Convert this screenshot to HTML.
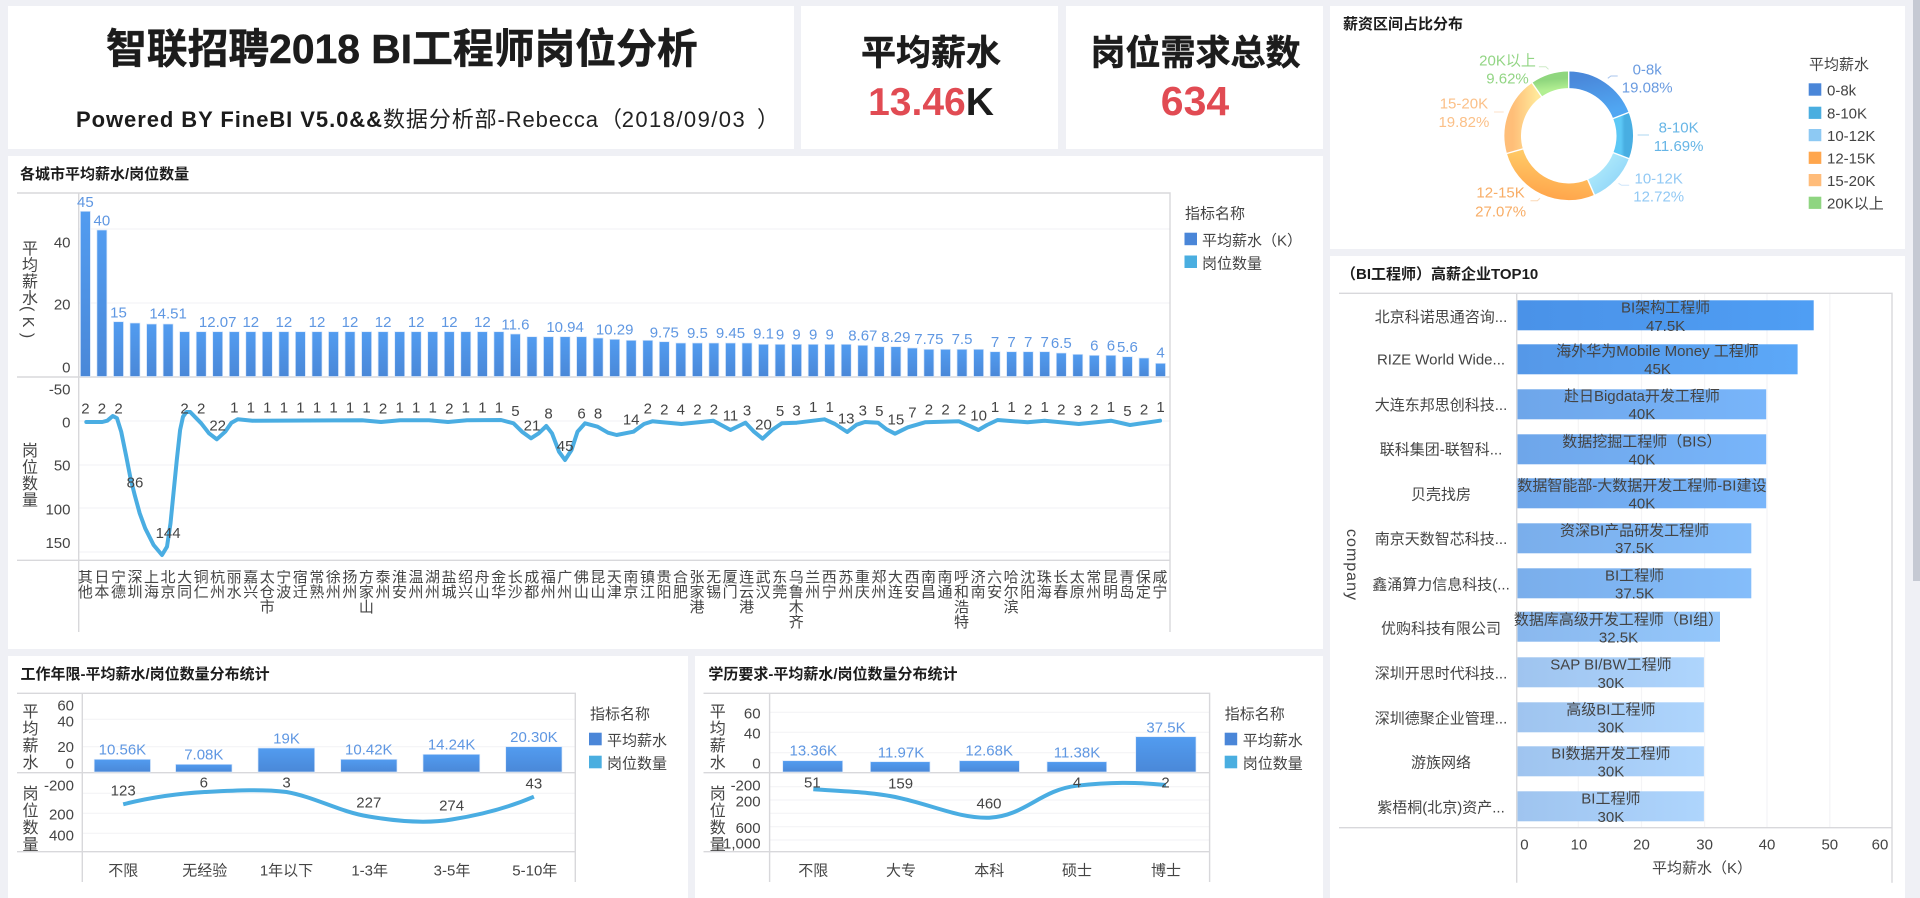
<!DOCTYPE html>
<html lang="zh">
<head>
<meta charset="utf-8">
<title>智联招聘2018 BI工程师岗位分析</title>
<style>
html,body{margin:0;padding:0;width:1920px;height:898px;overflow:hidden;background:#eff0f5;}
body{position:relative;font-family:"Liberation Sans","Noto Sans CJK SC",sans-serif;}
#w{position:absolute;left:0;top:0;width:1920px;height:898px;filter:blur(.35px);}
.p{position:absolute;background:#fff;}
svg{position:absolute;left:0;top:0;}
svg text{font-family:"Liberation Sans","Noto Sans CJK SC",sans-serif;font-size:15px;fill:#444;}
.h{font-weight:700;fill:#1c1c1c;}
.big{stroke:#1c1c1c;stroke-width:.5px;}
.m text{text-anchor:middle;}
.e text{text-anchor:end;}
.bl text{fill:#5f97e2;text-anchor:middle;}
.v{position:absolute;writing-mode:vertical-rl;width:20px;line-height:20px;font-size:16px;letter-spacing:.5px;color:#444;white-space:nowrap;}
.cities{position:absolute;left:77.13px;top:570px;width:1092px;height:60px;overflow:hidden;display:flex;}
.cities div{flex:0 0 16.54px;width:16.54px;text-align:center;font-size:15px;line-height:15px;color:#444;word-break:break-all;display:block;}
.cities span{display:block;width:16px;margin:0 auto;}
</style>
</head>
<body>
<div id="w">
<div class="p" style="left:8px;top:6px;width:786px;height:143px"></div>
<div class="p" style="left:801px;top:6px;width:257px;height:143px"></div>
<div class="p" style="left:1066px;top:6px;width:257px;height:143px"></div>
<div class="p" style="left:8px;top:156px;width:1315px;height:493px"></div>
<div class="p" style="left:8px;top:656px;width:680px;height:242px"></div>
<div class="p" style="left:695px;top:656px;width:628px;height:242px"></div>
<div class="p" style="left:1330px;top:6px;width:575px;height:243px"></div>
<div class="p" style="left:1330px;top:256px;width:575px;height:642px"></div>
<div style="position:absolute;left:1913px;top:0;width:7px;height:581px;background:#c5c9d3"></div>

<svg width="1920" height="898" viewBox="0 0 1920 898" xmlns="http://www.w3.org/2000/svg">
<defs>
<linearGradient id="vb" x1="0" y1="0" x2="0" y2="1"><stop offset="0" stop-color="#529cf0"/><stop offset="1" stop-color="#4a88d8"/></linearGradient>
<linearGradient id="h1" x1="0" x2="1" y1="0" y2="0"><stop offset="0" stop-color="#4a92e8"/><stop offset="1" stop-color="#4f9ef4"/></linearGradient>
<linearGradient id="h2" x1="0" x2="1" y1="0" y2="0"><stop offset="0" stop-color="#5598e8"/><stop offset="1" stop-color="#5ca8f8"/></linearGradient>
<linearGradient id="h3" x1="0" x2="1" y1="0" y2="0"><stop offset="0" stop-color="#6ea6ea"/><stop offset="1" stop-color="#78b5fa"/></linearGradient>
<linearGradient id="h4" x1="0" x2="1" y1="0" y2="0"><stop offset="0" stop-color="#7aaeeb"/><stop offset="1" stop-color="#84bdfa"/></linearGradient>
<linearGradient id="h5" x1="0" x2="1" y1="0" y2="0"><stop offset="0" stop-color="#8ab8ee"/><stop offset="1" stop-color="#94c7fb"/></linearGradient>
<linearGradient id="h6" x1="0" x2="1" y1="0" y2="0"><stop offset="0" stop-color="#9fc4ef"/><stop offset="1" stop-color="#aed5fd"/></linearGradient>
<linearGradient id="d1" x1="0" y1="0" x2="0.3" y2="1"><stop offset="0" stop-color="#4a88da"/><stop offset="1" stop-color="#50a6f2"/></linearGradient>
<linearGradient id="d2" x1="1" y1="0" x2="0" y2="0"><stop offset="0" stop-color="#48aee2"/><stop offset="1" stop-color="#5cc8f6"/></linearGradient>
<linearGradient id="d3" x1="1" y1="1" x2="0" y2="0"><stop offset="0" stop-color="#8ed4f8"/><stop offset="1" stop-color="#b8f0fc"/></linearGradient>
<linearGradient id="d4" x1="0" y1="1" x2="0.3" y2="0"><stop offset="0" stop-color="#ffa64c"/><stop offset="1" stop-color="#ffcc68"/></linearGradient>
<linearGradient id="d5" x1="0" y1="0" x2="1" y2="0"><stop offset="0" stop-color="#ffbe78"/><stop offset="1" stop-color="#ffe89a"/></linearGradient>
<linearGradient id="d6" x1="0.3" y1="0" x2="0.6" y2="1"><stop offset="0" stop-color="#8fd67e"/><stop offset="1" stop-color="#b2ef92"/></linearGradient>
</defs>

<!-- Header -->
<text class="h big" x="106" y="63" style="font-size:40.8px">智联招聘2018 BI工程师岗位分析</text>
<text class="h" x="76" y="127" textLength="306" lengthAdjust="spacing" style="font-size:22px">Powered BY FineBI V5.0&amp;&amp;</text>
<text x="383" y="127" textLength="215" lengthAdjust="spacing" style="font-size:22px;fill:#222">数据分析部-Rebecca</text>
<text x="600" y="127" style="font-size:22px;fill:#222">（</text>
<text x="621.7" y="127" textLength="123" lengthAdjust="spacing" style="font-size:22px;fill:#222">2018/09/03</text>
<text x="757" y="127" style="font-size:22px;fill:#222">）</text>
<text class="h big" x="931" y="65" text-anchor="middle" style="font-size:35px">平均薪水</text>
<text class="h" x="931" y="115" text-anchor="middle" style="font-size:39px;fill:#1c1c1c"><tspan style="fill:#e14b53">13.46</tspan>K</text>
<text class="h big" x="1195.5" y="65" text-anchor="middle" style="font-size:35px">岗位需求总数</text>
<text class="h" x="1195" y="115" text-anchor="middle" style="font-size:41px;fill:#e14b53">634</text>

<!-- Chart 1 frame -->
<text class="h" x="20" y="179">各城市平均薪水/岗位数量</text>
<g stroke="#f4f4f6" stroke-width="1.2">
<path d="M79 229H1170M79 303H1170M79 421H1170M79 465H1170M79 508H1170M79 552H1170"/>
</g>
<g fill="none" stroke="#d8d8db" stroke-width="1.4">
<path d="M17 193H1170V632M78.7 193V632M17 377H1170M17 560.3H1170"/>
</g>
<g class="e">
<text x="70.5" y="247.5">40</text><text x="70.5" y="309.5">20</text><text x="70.5" y="372.5">0</text><text x="70.5" y="394.5">-50</text><text x="70.5" y="427.5">0</text><text x="70.5" y="470.5">50</text><text x="70.5" y="514.5">100</text><text x="70.5" y="548">150</text>
</g>
<g fill="url(#vb)" stroke="#dbe8fa" stroke-width=".7">
<rect x="80.4" y="211.3" width="10" height="165.2"/><rect x="96.9" y="230" width="10" height="146.5"/><rect x="113.5" y="321.7" width="10" height="54.8"/><rect x="130" y="323" width="10" height="53.5"/><rect x="146.6" y="324" width="10" height="52.5"/><rect x="163.1" y="324" width="10" height="52.5"/>
<rect x="179.6" y="331.7" width="10" height="44.8"/><rect x="196.2" y="331.7" width="10" height="44.8"/><rect x="212.7" y="331.7" width="10" height="44.8"/><rect x="229.3" y="331.7" width="10" height="44.8"/><rect x="245.8" y="331.7" width="10" height="44.8"/><rect x="262.3" y="331.7" width="10" height="44.8"/><rect x="278.9" y="331.7" width="10" height="44.8"/><rect x="295.4" y="331.7" width="10" height="44.8"/><rect x="312" y="331.7" width="10" height="44.8"/><rect x="328.5" y="331.7" width="10" height="44.8"/><rect x="345" y="331.7" width="10" height="44.8"/><rect x="361.6" y="331.7" width="10" height="44.8"/><rect x="378.1" y="331.7" width="10" height="44.8"/><rect x="394.7" y="331.7" width="10" height="44.8"/><rect x="411.2" y="331.7" width="10" height="44.8"/><rect x="427.7" y="331.7" width="10" height="44.8"/><rect x="444.3" y="331.7" width="10" height="44.8"/><rect x="460.8" y="331.7" width="10" height="44.8"/><rect x="477.4" y="331.7" width="10" height="44.8"/><rect x="493.9" y="331.7" width="10" height="44.8"/>
<rect x="510.4" y="334" width="10" height="42.5"/><rect x="527" y="336.7" width="10" height="39.8"/><rect x="543.5" y="336.7" width="10" height="39.8"/><rect x="560.1" y="336.7" width="10" height="39.8"/><rect x="576.6" y="336.7" width="10" height="39.8"/><rect x="593.1" y="338" width="10" height="38.5"/><rect x="609.7" y="339.3" width="10" height="37.2"/><rect x="626.2" y="340.3" width="10" height="36.2"/><rect x="642.8" y="340.3" width="10" height="36.2"/><rect x="659.3" y="341.7" width="10" height="34.8"/>
<rect x="675.8" y="343" width="10" height="33.5"/><rect x="692.4" y="343" width="10" height="33.5"/><rect x="708.9" y="343" width="10" height="33.5"/><rect x="725.5" y="343" width="10" height="33.5"/><rect x="742" y="343" width="10" height="33.5"/>
<rect x="758.5" y="344.3" width="10" height="32.2"/><rect x="775.1" y="344.3" width="10" height="32.2"/><rect x="791.6" y="344.3" width="10" height="32.2"/><rect x="808.2" y="344.3" width="10" height="32.2"/><rect x="824.7" y="344.3" width="10" height="32.2"/><rect x="841.2" y="344.3" width="10" height="32.2"/>
<rect x="857.8" y="345.3" width="10" height="31.2"/><rect x="874.3" y="346.7" width="10" height="29.8"/><rect x="890.9" y="346.7" width="10" height="29.8"/><rect x="907.4" y="348" width="10" height="28.5"/><rect x="923.9" y="349.3" width="10" height="27.2"/><rect x="940.5" y="349.3" width="10" height="27.2"/><rect x="957" y="349.3" width="10" height="27.2"/><rect x="973.6" y="349.3" width="10" height="27.2"/>
<rect x="990.1" y="351.7" width="10" height="24.8"/><rect x="1006.6" y="351.7" width="10" height="24.8"/><rect x="1023.2" y="351.7" width="10" height="24.8"/><rect x="1039.7" y="351.7" width="10" height="24.8"/><rect x="1056.3" y="353" width="10" height="23.5"/><rect x="1072.8" y="354.3" width="10" height="22.2"/><rect x="1089.3" y="355.3" width="10" height="21.2"/><rect x="1105.9" y="355.3" width="10" height="21.2"/><rect x="1122.4" y="356.7" width="10" height="19.8"/><rect x="1139" y="358" width="10" height="18.5"/><rect x="1155.5" y="363.3" width="10" height="13.2"/>
</g>
<g class="bl">
<text x="85.4" y="207">45</text><text x="101.9" y="225.5">40</text><text x="118.5" y="317.5">15</text><text x="168.1" y="318.5">14.51</text><text x="217.7" y="327">12.07</text><text x="250.8" y="327">12</text><text x="283.9" y="327">12</text><text x="317" y="327">12</text><text x="350" y="327">12</text><text x="383.1" y="327">12</text><text x="416.2" y="327">12</text><text x="449.3" y="327">12</text><text x="482.4" y="327">12</text><text x="515.4" y="329.3">11.6</text><text x="565.1" y="332">10.94</text><text x="614.7" y="334.3">10.29</text><text x="664.3" y="337.6">9.75</text><text x="697.4" y="338">9.5</text><text x="730.5" y="338">9.45</text><text x="763.5" y="338.6">9.1</text><text x="780.1" y="339.3">9</text><text x="796.6" y="339.3">9</text><text x="813.2" y="339.3">9</text><text x="829.7" y="339.3">9</text><text x="862.8" y="340.3">8.67</text><text x="895.9" y="342">8.29</text><text x="928.9" y="344">7.75</text><text x="962" y="344">7.5</text><text x="995.1" y="347">7</text><text x="1011.6" y="347">7</text><text x="1028.2" y="347">7</text><text x="1044.7" y="347">7</text><text x="1061.3" y="348">6.5</text><text x="1094.3" y="350.3">6</text><text x="1110.9" y="350.3">6</text><text x="1127.4" y="352">5.6</text><text x="1160.5" y="357.6">4</text>
</g>
<path fill="none" stroke="#4aade2" stroke-width="4" stroke-linejoin="round" stroke-linecap="round" d="M86.3 422L102.3 422L107.3 420.7L112.8 416L117 418.3L121.2 431.7L126.3 456.7L130.5 478.3L134.7 495L139.7 513.3L145.2 528.3L153.6 545L162 555L167 546.7L170.5 523.3L173.8 490L176.8 460L180.1 430L183 416.7L186.4 412L190.2 412L201.2 423.3L209 433.3L216.8 439.3L225.2 431.7L231.5 422.7L237.8 419.3L252.5 420.7L362 420.3L381 422L400 420.3L429 420.3L448 422L467 420.3L501 420L513.5 423.3L522 431.7L531 438.3L538.7 433.3L546.3 426L552 433.3L559 451.7L565 460L571.5 450L577.5 431.7L585 423.3L597.6 426.7L608 432.7L616.6 435L633.4 431.7L644 424L652.4 421.3L660 422L681.4 424L713.4 420.7L730.5 430L745.5 422.7L754 431.7L762.6 438.7L772 430L781.8 423.3L796.8 422.7L824.5 419.3L835 424L847.2 432L856.6 424.7L865 422L878 422.7L886.5 429.3L895 433.7L907.9 427.3L925 422.3L959 421.3L969.8 426L978.4 430L987 425L997.6 420L1027.5 422.3L1044.6 420.7L1078.8 424L1110.9 420.7L1130 425L1160 420.7"/>
<g class="m">
<text x="85.4" y="413.6">2</text><text x="101.9" y="413.6">2</text><text x="118.5" y="413.6">2</text><text x="135" y="487.6">86</text><text x="168.1" y="538">144</text><text x="184.6" y="413.6">2</text><text x="201.2" y="413.6">2</text><text x="217.7" y="430.3">22</text><text x="234.3" y="412.6">1</text><text x="250.8" y="412.6">1</text><text x="267.3" y="412.6">1</text><text x="283.9" y="412.6">1</text><text x="300.4" y="412.6">1</text><text x="317" y="412.6">1</text><text x="333.5" y="412.6">1</text><text x="350" y="412.6">1</text><text x="366.6" y="412.6">1</text><text x="383.1" y="413.6">2</text><text x="399.7" y="412.6">1</text><text x="416.2" y="412.6">1</text><text x="432.7" y="412.6">1</text><text x="449.3" y="413.6">2</text><text x="465.8" y="412.6">1</text><text x="482.4" y="412.6">1</text><text x="498.9" y="412.6">1</text><text x="515.4" y="416">5</text><text x="532" y="430.3">21</text><text x="548.5" y="418.6">8</text><text x="565.1" y="451">45</text><text x="581.6" y="418.6">6</text><text x="598.1" y="418.6">8</text><text x="631.2" y="424.3">14</text><text x="647.8" y="413.6">2</text>
<text x="664.3" y="414.3">2</text><text x="680.8" y="414.3">4</text><text x="697.4" y="414.3">2</text><text x="713.9" y="414.3">2</text><text x="730.5" y="420.6">11</text><text x="747" y="415.3">3</text><text x="763.5" y="429.3">20</text><text x="780.1" y="416">5</text><text x="796.6" y="415.3">3</text><text x="813.2" y="412">1</text><text x="829.7" y="412">1</text><text x="846.2" y="423.6">13</text><text x="862.8" y="415.3">3</text><text x="879.3" y="416">5</text><text x="895.9" y="424.6">15</text><text x="912.4" y="417.6">7</text><text x="928.9" y="414.3">2</text><text x="945.5" y="414.3">2</text><text x="962" y="414.3">2</text><text x="978.6" y="420.6">10</text><text x="995.1" y="412">1</text><text x="1011.6" y="412">1</text><text x="1028.2" y="414.3">2</text><text x="1044.7" y="412">1</text><text x="1061.3" y="414.3">2</text><text x="1077.8" y="415.3">3</text><text x="1094.3" y="414.3">2</text><text x="1110.9" y="412">1</text><text x="1127.4" y="416">5</text><text x="1144" y="414.3">2</text><text x="1160.5" y="412">1</text>
</g>
<!-- legend chart 1 -->
<text x="1185" y="218.5">指标名称</text>
<rect x="1184.5" y="232.7" width="12.5" height="12.5" fill="#4a86d8"/><text x="1202" y="245.5" style="font-size:15px">平均薪水（K）</text>
<rect x="1184.5" y="255.5" width="12.5" height="12.5" fill="#4aaee0"/><text x="1202" y="268.5">岗位数量</text>

<!-- Chart 2 -->
<text class="h" x="20.5" y="679">工作年限-平均薪水/岗位数量分布统计</text>
<path stroke="#f4f4f6" stroke-width="1.2" d="M83 719.3H575M83 746.7H575M83 793.3H575M83 813.3H575M83 833.3H575"/>
<path fill="none" stroke="#d8d8db" stroke-width="1.4" d="M17 693.3H575.3V882M82.3 693.3V882M17 772.7H575.3M17 851.7H575.3"/>
<g class="e"><text x="74" y="710.3">60</text><text x="74" y="726.3">40</text><text x="74" y="752">20</text><text x="74" y="768.3">0</text><text x="74" y="790.3">-200</text><text x="74" y="819.3">200</text><text x="74" y="840.3">400</text></g>
<g fill="url(#vb)" stroke="#dbe8fa" stroke-width=".7"><rect x="94.2" y="759.3" width="56.3" height="12.7"/><rect x="175.6" y="764.3" width="56.4" height="7.7"/><rect x="258" y="748" width="56.7" height="24"/><rect x="340.7" y="759.3" width="56.3" height="12.7"/><rect x="423" y="754.3" width="56.8" height="17.7"/><rect x="505.7" y="746.7" width="56.3" height="25.3"/></g>
<g class="bl"><text x="122.4" y="754.3">10.56K</text><text x="203.8" y="759.3">7.08K</text><text x="286.5" y="743.3">19K</text><text x="368.8" y="754.3">10.42K</text><text x="451.6" y="749.3">14.24K</text><text x="533.9" y="742">20.30K</text></g>
<path fill="none" stroke="#4aade2" stroke-width="4" d="M123.2 804.3C150 797.5 178 793.5 204.7 792C235 790.5 262 789 286.5 792C315 797 340 812 368.8 816.5C395 821 425 824 451.6 819.5C480 815 510 807 533.9 796.7"/>
<g class="m"><text x="123.2" y="795.3">123</text><text x="203.8" y="787.6">6</text><text x="286.5" y="787.6">3</text><text x="368.8" y="807.6">227</text><text x="451.6" y="810.6">274</text><text x="533.9" y="788.6">43</text>
<text x="123.2" y="875.5">不限</text><text x="204.7" y="875.5">无经验</text><text x="286.5" y="875.5">1年以下</text><text x="369.7" y="875.5">1-3年</text><text x="452" y="875.5">3-5年</text><text x="534.8" y="875.5">5-10年</text></g>
<text x="590" y="718.8">指标名称</text>
<rect x="589" y="732.7" width="12.7" height="12.6" fill="#4a86d8"/><text x="607" y="745.5">平均薪水</text>
<rect x="589" y="755.7" width="12.7" height="12.6" fill="#4aaee0"/><text x="607" y="768.5">岗位数量</text>

<!-- Chart 3 -->
<text class="h" x="708.4" y="679">学历要求-平均薪水/岗位数量分布统计</text>
<path stroke="#f4f4f6" stroke-width="1.2" d="M770 712.3H1209M770 732.3H1209M770 752.7H1209M770 786.7H1209M770 800H1209M770 813.3H1209M770 826.7H1209M770 840H1209"/>
<path fill="none" stroke="#d8d8db" stroke-width="1.4" d="M703.5 693.3H1209.6V882M769.6 693.3V882M703.5 772.7H1209.6M703.5 851.7H1209.6"/>
<g class="e"><text x="760.6" y="718.6">60</text><text x="760.6" y="738.6">40</text><text x="760.6" y="768.6">0</text><text x="760.6" y="790.3">-200</text><text x="760.6" y="806.3">200</text><text x="760.6" y="833">600</text><text x="760.6" y="848.6">1,000</text></g>
<g fill="url(#vb)" stroke="#dbe8fa" stroke-width=".7"><rect x="782.7" y="760.7" width="60" height="11.3"/><rect x="870.4" y="761.7" width="59.6" height="10.3"/><rect x="959.4" y="760.7" width="60" height="11.3"/><rect x="1047" y="761.7" width="59.7" height="10.3"/><rect x="1135.7" y="736.7" width="60.3" height="35.3"/></g>
<g class="bl"><text x="813.3" y="755.3">13.36K</text><text x="901" y="757.3">11.97K</text><text x="989.2" y="755.3">12.68K</text><text x="1077" y="757.6">11.38K</text><text x="1166" y="732.3">37.5K</text></g>
<path fill="none" stroke="#4aade2" stroke-width="4" d="M813.3 789.3C845 791.5 875 792 901 798.3C935 806 960 818.5 989.2 817.7C1025 816 1040 790 1077 785.7C1110 782 1135 782 1166 785"/>
<g class="m"><text x="812.4" y="787.6">51</text><text x="900.6" y="788.6">159</text><text x="989" y="808.6">460</text><text x="1077" y="787.6">4</text><text x="1165.5" y="787.6">2</text>
<text x="813.3" y="875.5">不限</text><text x="901" y="875.5">大专</text><text x="989.2" y="875.5">本科</text><text x="1077" y="875.5">硕士</text><text x="1166" y="875.5">博士</text></g>
<text x="1224.7" y="718.8">指标名称</text>
<rect x="1224.7" y="732.7" width="12.5" height="12.6" fill="#4a86d8"/><text x="1242.7" y="745.5">平均薪水</text>
<rect x="1224.7" y="755.7" width="12.5" height="12.6" fill="#4aaee0"/><text x="1242.7" y="768.5">岗位数量</text>

<!-- Donut -->
<text class="h" x="1343" y="29">薪资区间占比分布</text>
<g fill="none" stroke-width="16.6">
<path stroke="url(#d1)" d="M1568.7 79.8A56 56 0 0 1 1620.9 115.5"/>
<path stroke="url(#d2)" d="M1620.9 115.5A56 56 0 0 1 1621.1 155.7"/>
<path stroke="url(#d3)" d="M1621.1 155.7A56 56 0 0 1 1591 187.2"/>
<path stroke="url(#d4)" d="M1591 187.2A56 56 0 0 1 1514.9 151.2"/>
<path stroke="url(#d5)" d="M1514.9 151.2A56 56 0 0 1 1536.9 89.7"/>
<path stroke="url(#d6)" d="M1536.9 89.7A56 56 0 0 1 1568.7 79.8"/>
</g>
<path stroke="#fff" stroke-width="1.4" d="M1568.7 135.8L1568.7 67.8M1568.7 135.8L1632.1 111.1M1568.7 135.8L1632.3 159.9M1568.7 135.8L1595.8 198.2M1568.7 135.8L1503.3 154.5M1568.7 135.8L1530 79.9"/>
<circle cx="1568.7" cy="135.8" r="47.4" fill="#fff"/>
<g fill="none" stroke-width="1">
<path stroke="#a9c6ee" d="M1607.8 78.3L1610.9 76H1617.7"/>
<path stroke="#bfe0f4" stroke-width="1.3" d="M1637.6 135H1649"/>
<path stroke="#cfe6fa" d="M1618.5 183.3L1621.6 185.3H1629.2"/>
<path stroke="#fbd8b6" d="M1530.5 200.7H1537.4L1540 198.3"/>
<path stroke="#fde2c8" d="M1494 112H1503.7"/>
<path stroke="#cdeac6" d="M1538.9 66.7H1545.8L1548.5 69.3"/>
</g>
<g class="m">
<text x="1647.2" y="74.3" style="fill:#6a9be0">0-8k</text><text x="1647.2" y="92.6" style="fill:#6a9be0">19.08%</text>
<text x="1678.6" y="132.6" style="fill:#66b5e6">8-10K</text><text x="1678.6" y="151" style="fill:#66b5e6">11.69%</text>
<text x="1658.7" y="183.3" style="fill:#92c9f4">10-12K</text><text x="1658.7" y="201.3" style="fill:#92c9f4">12.72%</text>
<text x="1500.6" y="197.6" style="fill:#f8ad66">12-15K</text><text x="1500.6" y="216.3" style="fill:#f8ad66">27.07%</text>
<text x="1463.9" y="108.6" style="fill:#fbc088">15-20K</text><text x="1463.9" y="127" style="fill:#fbc088">19.82%</text>
<text x="1507.5" y="65.3" style="fill:#92d584">20K以上</text><text x="1507.5" y="83.3" style="fill:#92d584">9.62%</text>
</g>
<text x="1809" y="69.5">平均薪水</text>
<rect x="1808.7" y="83.3" width="12.6" height="12.4" fill="#4a86d8"/><text x="1827" y="95.3">0-8k</text>
<rect x="1808.7" y="106.7" width="12.6" height="12.2" fill="#4aaee0"/><text x="1827" y="118.6">8-10K</text>
<rect x="1808.7" y="129" width="12.6" height="12.2" fill="#8dc9f3"/><text x="1827" y="141">10-12K</text>
<rect x="1808.7" y="151.7" width="12.6" height="12.2" fill="#ffa64d"/><text x="1827" y="163.6">12-15K</text>
<rect x="1808.7" y="174" width="12.6" height="12.2" fill="#ffbc7a"/><text x="1827" y="186">15-20K</text>
<rect x="1808.7" y="196.7" width="12.6" height="12.2" fill="#8fd581"/><text x="1827" y="208.6">20K以上</text>

<!-- Horizontal bar chart -->
<text class="h" x="1341" y="279">（BI工程师）高薪企业TOP10</text>
<path stroke="#f4f4f6" stroke-width="1.2" d="M1578.3 294V827M1641.5 294V827M1704.6 294V827M1767 294V827M1829.8 294V827"/>
<rect x="1517.5" y="300.3" width="296.2" height="30" fill="url(#h1)"/>
<rect x="1517.5" y="344.3" width="280.1" height="30" fill="url(#h2)"/>
<rect x="1517.5" y="389.3" width="248.7" height="30" fill="url(#h3)"/>
<rect x="1517.5" y="434.3" width="248.7" height="30" fill="url(#h3)"/>
<rect x="1517.5" y="478.3" width="248.7" height="30" fill="url(#h3)"/>
<rect x="1517.5" y="523.3" width="233.8" height="30" fill="url(#h4)"/>
<rect x="1517.5" y="568.3" width="233.8" height="30" fill="url(#h4)"/>
<rect x="1517.5" y="611.7" width="202.5" height="30" fill="url(#h5)"/>
<rect x="1517.5" y="657.3" width="186.4" height="30" fill="url(#h6)"/>
<rect x="1517.5" y="702.3" width="186.4" height="30" fill="url(#h6)"/>
<rect x="1517.5" y="746.3" width="186.4" height="30" fill="url(#h6)"/>
<rect x="1517.5" y="791.3" width="186.4" height="30" fill="url(#h6)"/>
<path fill="none" stroke="#d8d8db" stroke-width="1.4" d="M1339 293.3H1892V882.7M1516.7 293.3V882.7M1339 827.7H1892"/>
<g class="m">
<text x="1665.6" y="312.6">BI架构工程师</text><text x="1665.6" y="331">47.5K</text>
<text x="1657.5" y="356">海外华为Mobile Money 工程师</text><text x="1657.5" y="374">45K</text>
<text x="1641.9" y="401">赴日Bigdata开发工程师</text><text x="1641.9" y="419">40K</text>
<text x="1641.9" y="446.3">数据挖掘工程师（BIS）</text><text x="1641.9" y="464.3">40K</text>
<text x="1641.9" y="490.3">数据智能部-大数据开发工程师-BI建设</text><text x="1641.9" y="508.6">40K</text>
<text x="1634.6" y="535.3">资深BI产品研发工程师</text><text x="1634.6" y="553">37.5K</text>
<text x="1634.6" y="580.3">BI工程师</text><text x="1634.6" y="598.6">37.5K</text>
<text x="1618.5" y="624.6">数据库高级开发工程师（BI组）</text><text x="1618.5" y="642.6">32.5K</text>
<text x="1610.9" y="669.6">SAP BI/BW工程师</text><text x="1610.9" y="688">30K</text>
<text x="1610.9" y="714.3">高级BI工程师</text><text x="1610.9" y="732.6">30K</text>
<text x="1610.9" y="758.6">BI数据开发工程师</text><text x="1610.9" y="776.6">30K</text>
<text x="1610.9" y="803.6">BI工程师</text><text x="1610.9" y="822">30K</text>
<text x="1441" y="322">北京科诺思通咨询...</text>
<text x="1441" y="364.6">RIZE World Wide...</text>
<text x="1441" y="410">大连东邦思创科技...</text>
<text x="1441" y="454.6">联科集团-联智科...</text>
<text x="1441" y="499.3">贝壳找房</text>
<text x="1441" y="544">南京天数智芯科技...</text>
<text x="1441" y="589.3">鑫涌算力信息科技(...</text>
<text x="1441" y="633.6">优购科技有限公司</text>
<text x="1441" y="678.6">深圳开思时代科技...</text>
<text x="1441" y="723.6">深圳德聚企业管理...</text>
<text x="1441" y="767.6">游族网络</text>
<text x="1441" y="812.6">紫梧桐(北京)资产...</text>
<text x="1524.4" y="849.6">0</text><text x="1579" y="849.6">10</text><text x="1641.5" y="849.6">20</text><text x="1704.6" y="849.6">30</text><text x="1767" y="849.6">40</text><text x="1829.8" y="849.6">50</text><text x="1880" y="849.6">60</text>
<text x="1702" y="873">平均薪水（K）</text>
<text x="0" y="0" transform="translate(1347 565) rotate(90)" style="font-size:16px;letter-spacing:1px">company</text>
</g>
</svg>

<div class="v" style="left:17px;top:240px">平均薪水( K )</div>
<div class="v" style="left:17px;top:442px">岗位数量</div>
<div class="v" style="left:17.5px;top:703px;letter-spacing:1px">平均薪水</div>
<div class="v" style="left:17.5px;top:785px;letter-spacing:1px">岗位数量</div>
<div class="v" style="left:704.7px;top:703px;letter-spacing:1px">平均薪水</div>
<div class="v" style="left:704.7px;top:785px;letter-spacing:1px">岗位数量</div>

<div class="cities">
<div><span>其他</span></div><div><span>日本</span></div><div><span>宁德</span></div><div><span>深圳</span></div><div><span>上海</span></div><div><span>北京</span></div><div><span>大同</span></div><div><span>铜仁</span></div><div><span>杭州</span></div><div><span>丽水</span></div><div><span>嘉兴</span></div><div><span>太仓市</span></div><div><span>宁波</span></div><div><span>宿迁</span></div><div><span>常熟</span></div><div><span>徐州</span></div><div><span>扬州</span></div><div><span>方家山</span></div><div><span>泰州</span></div><div><span>淮安</span></div><div><span>温州</span></div><div><span>湖州</span></div><div><span>盐城</span></div><div><span>绍兴</span></div><div><span>舟山</span></div><div><span>金华</span></div><div><span>长沙</span></div><div><span>成都</span></div><div><span>福州</span></div><div><span>广州</span></div><div><span>佛山</span></div><div><span>昆山</span></div><div><span>天津</span></div><div><span>南京</span></div><div><span>镇江</span></div><div><span>贵阳</span></div><div><span>合肥</span></div><div><span>张家港</span></div><div><span>无锡</span></div><div><span>厦门</span></div><div><span>连云港</span></div><div><span>武汉</span></div><div><span>东莞</span></div><div><span>乌鲁木齐</span></div><div><span>兰州</span></div><div><span>西宁</span></div><div><span>苏州</span></div><div><span>重庆</span></div><div><span>郑州</span></div><div><span>大连</span></div><div><span>西安</span></div><div><span>南昌</span></div><div><span>南通</span></div><div><span>呼和浩特</span></div><div><span>济南</span></div><div><span>六安</span></div><div><span>哈尔滨</span></div><div><span>沈阳</span></div><div><span>珠海</span></div><div><span>长春</span></div><div><span>太原</span></div><div><span>常州</span></div><div><span>昆明</span></div><div><span>青岛</span></div><div><span>保定</span></div><div><span>咸宁</span></div>
</div>
</div>
</body>
</html>
